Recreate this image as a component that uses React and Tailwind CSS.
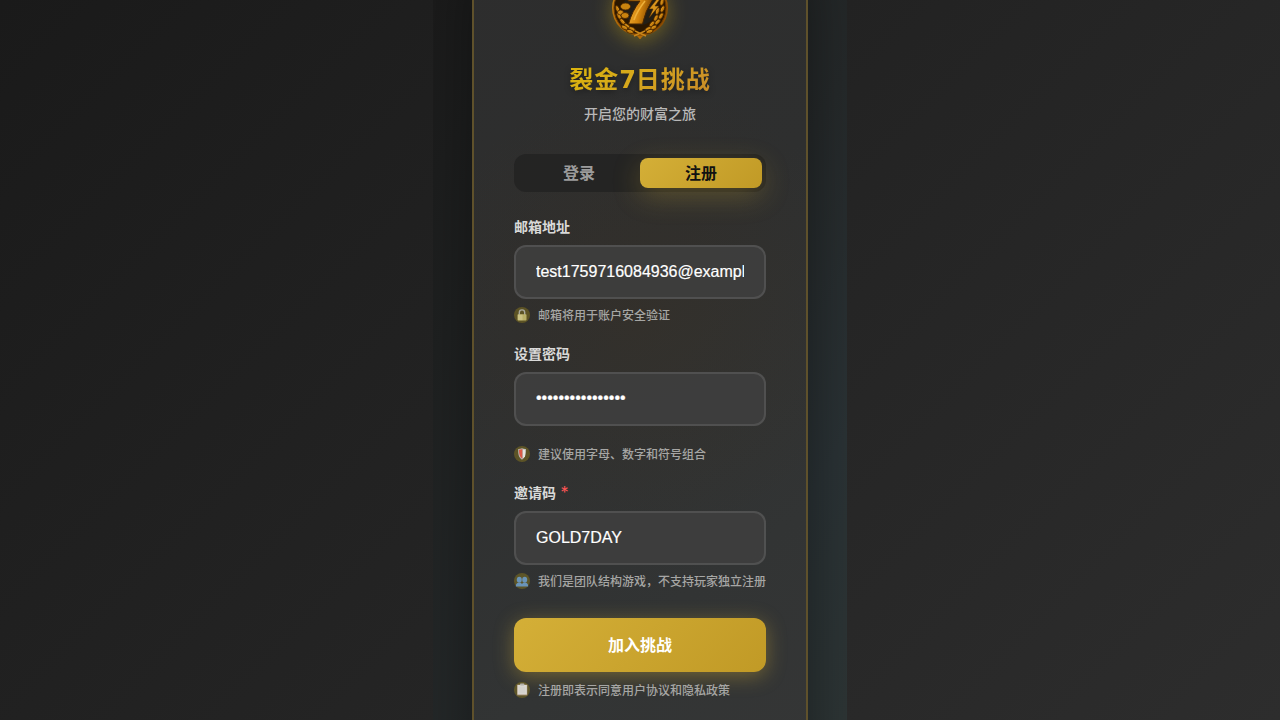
import React from "react";

function Leaf({ x, y, r }) {
  return (
    <g transform={`translate(${x} ${y}) rotate(${r})`}>
      <ellipse rx="3.6" ry="1.8" fill="#c47c0c" stroke="#3d1f00" strokeWidth=".7" />
      <path d="M-2-.4Q0-1.3 2-.4" stroke="#e8a92c" strokeWidth=".5" fill="none" />
    </g>
  );
}

function Medal() {
  return (
    <svg viewBox="0 0 60 60" className="h-[60px] w-[60px] shrink-0 overflow-visible drop-shadow-[0_4px_10px_rgba(190,160,20,0.45)]">
      <defs>
        <linearGradient id="rim" x1="0" y1="0" x2="1" y2="1">
          <stop offset="0" stopColor="#d8931a" />
          <stop offset=".5" stopColor="#a86105" />
          <stop offset="1" stopColor="#7d4200" />
        </linearGradient>
        <linearGradient id="seven" x1="0" y1="0" x2="1" y2=".3">
          <stop offset="0" stopColor="#a86208" />
          <stop offset=".35" stopColor="#e39a20" />
          <stop offset=".6" stopColor="#d0820c" />
          <stop offset="1" stopColor="#7d4300" />
        </linearGradient>
      </defs>
      <path d="M25 54h10l-3 3-1.500 2h-1L28 57z" fill="#b36b08" />
      <circle cx="30" cy="28" r="28" fill="url(#rim)" />
      <circle cx="30" cy="28" r="26" fill="#2b1700" stroke="#6b3900" strokeWidth="1" />
      <circle cx="30" cy="28" r="17" fill="#221e16" />
      <Leaf x={7.500} y={29} r={70} />
      <Leaf x={9} y={36} r={65} />
      <Leaf x={12.500} y={41.500} r={50} />
      <Leaf x={17} y={46} r={38} />
      <Leaf x={14.500} y={47.500} r={28} />
      <Leaf x={22} y={49} r={25} />
      <Leaf x={20} y={51.500} r={15} />
      <Leaf x={52} y={22} r={-75} />
      <Leaf x={52.500} y={29} r={-65} />
      <Leaf x={47.500} y={31} r={-75} />
      <Leaf x={51} y={36} r={-60} />
      <Leaf x={46} y={38} r={-65} />
      <Leaf x={47.500} y={42} r={-45} />
      <Leaf x={42} y={44} r={-50} />
      <Leaf x={43.500} y={47.500} r={-28} />
      <Leaf x={38} y={49} r={-30} />
      <Leaf x={39.500} y={51.500} r={-15} />
      <path d="M25 51l11 5M35 51l-11 5" stroke="#c9861a" strokeWidth="1.400" />
      <ellipse cx="15.500" cy="26.500" rx="5" ry="3.500" fill="#c9830f" stroke="#4a2600" strokeWidth=".8" />
      <ellipse cx="10.500" cy="32.500" rx="3" ry="2.500" fill="#cf8a18" stroke="#4a2600" strokeWidth=".8" />
      <ellipse cx="15" cy="35.500" rx="4" ry="3" fill="#c9830f" stroke="#4a2600" strokeWidth=".8" />
      <path d="M18 12h26l-1 7Q35 31 32.500 44H18.500Q22 31 30 21H18z" fill="url(#seven)" stroke="#4a2600" strokeWidth="1" />
      <path d="M35 21Q27 31 24 40" stroke="#eeb03a" strokeWidth="1.600" fill="none" />
      <path d="M47 19l-8 10h4l-4 9 10-12h-4l5-7z" fill="#d9941c" stroke="#4a2600" strokeWidth=".6" />
    </svg>
  );
}

const glyphs = {
  lock: (
    <g>
      <path d="M5.300 8V5.600a2.700 2.700 0 015.400 0V8" fill="none" stroke="#a9a99c" strokeWidth="1.400" />
      <rect x="3.500" y="7.200" width="9" height="6.400" rx=".8" fill="#b9b068" />
      <path d="M4 7.600h4.500v5.600H4z" fill="#d5cf98" opacity=".6" />
    </g>
  ),
  shield: (
    <g>
      <path d="M8 2.300Q10.500 3.300 12 3C12.300 8 11.300 11.600 8 13.700 4.700 11.600 4 8 4.200 3Q5.700 3.300 8 2.300z" fill="#b9b8b2" />
      <path d="M8.300 3Q6.500 4 5 3.800C5 8 5.700 11 8.300 12.700z" fill="#dc5a48" />
      <path d="M9.200 3.400l1.600.4v6.700L9.200 12.200z" fill="#f0efea" />
    </g>
  ),
  people: (
    <g fill="#6a94b8">
      <ellipse cx="5.300" cy="6.800" rx="2.500" ry="3" />
      <ellipse cx="10.700" cy="6.800" rx="2.500" ry="3" />
      <path d="M1.800 13.500c0-2.700 1.200-3.500 2.600-3.800h1.800c1 .2 1.500.7 1.800 1.400.3-.7.800-1.200 1.800-1.400h1.800c1.400.3 2.600 1.100 2.600 3.800z" />
    </g>
  ),
  clipboard: (
    <g>
      <rect x="3" y="2.600" width="10.400" height="10.800" rx=".6" fill="#9c8566" />
      <rect x="3.500" y="3" width="9.400" height="9.600" fill="#d9d6d0" />
      <rect x="6" y="1.400" width="4.400" height="2" rx=".8" fill="#b5b3ad" />
      <path d="M5 6h6M5 8h6M5 10h6" stroke="#cbc9c4" strokeWidth=".6" />
    </g>
  ),
};

function Hint({ icon, className, children }) {
  return (
    <div className={`flex h-4 items-center gap-2 whitespace-nowrap text-xs leading-4 font-medium text-[#a6a6a4] ${className}`}>
      <span className="h-4 w-4 shrink-0 rounded-full bg-[#a08a18]/40">
        <svg viewBox="0 0 16 16" className="h-4 w-4">{glyphs[icon]}</svg>
      </span>
      <span className="pt-0.5">{children}</span>
    </div>
  );
}

function Field({ label, type = "text", value, required, className }) {
  return (
    <label className={`block ${className}`}>
      <span className="block h-5 text-sm leading-5 font-bold text-[#d9d9d8]">
        {label}
        {required && <span className="text-base leading-none font-normal text-[#ff5555]"> *</span>}
      </span>
      <input
        type={type}
        defaultValue={value}
        className={`mt-2 block h-[54px] w-full rounded-xl border-2 border-white/10 bg-[#404040]/85 px-5 font-['Liberation_Sans',sans-serif] text-base text-white outline-none [-webkit-text-stroke:0.2px_white] ${type === "password" ? "pb-0.5" : ""}`}
      />
    </label>
  );
}

export default function App() {
  return (
    <main className="h-[720px] overflow-hidden bg-[linear-gradient(135deg,#1a1a1a_0%,#2d2d2d_100%)] font-[Inter,'Noto_Sans_CJK_SC',sans-serif]">
      <div className="mx-auto flex h-[720px] w-[414px] items-center justify-center overflow-hidden bg-[linear-gradient(120deg,#1b1b1b_0%,#1f2121_25%,#25292a_55%,#2a3235_80%,#2d3535_100%)]">
        <section className="flex h-[844px] w-[336px] shrink-0 flex-col items-center rounded-3xl border-2 border-[#5f512b] bg-[radial-gradient(circle_at_50%_44%,rgba(62,48,30,0.28)_0%,rgba(62,48,30,0)_230px),linear-gradient(145deg,#2d2d2d_0%,#2e2f2f_40%,#323434_75%,#353636_100%)] px-10 pt-10 shadow-[0_20px_60px_rgba(0,0,0,0.4)]">
          <Medal />
          <h1 className="mt-[25px] h-[30px] bg-[linear-gradient(135deg,#dcb50c_0%,#d5a61e_50%,#c98a28_100%)] bg-clip-text text-2xl leading-[30px] font-bold tracking-[1px] whitespace-nowrap text-transparent drop-shadow-[0_2px_3px_rgba(0,0,0,0.35)]">
            裂金<span className="font-['DejaVu_Sans',sans-serif] tracking-[-0.4px]">7</span>日挑战
          </h1>
          <p className="mt-[9px] h-5 text-sm leading-5 font-medium text-[#b8b8b8]">开启您的财富之旅</p>

          <div className="mt-[30px] flex h-[38px] w-full rounded-xl bg-[#1e1e1e]/65 p-1 text-base leading-[30px] font-bold">
            <button className="flex-1 rounded-lg text-[#9c9c9c]">登录</button>
            <button className="flex-1 rounded-lg bg-[linear-gradient(135deg,#d4af37_0%,#c19a26_100%)] text-[#111] shadow-[0_8px_28px_rgba(212,175,55,0.28)]">
              注册
            </button>
          </div>

          <form className="w-full">
            <Field className="mt-[25px]" label="邮箱地址" value="test1759716084936@example.com" />
            <Hint icon="lock" className="mt-2">邮箱将用于账户安全验证</Hint>
            <Field className="mt-[21px]" label="设置密码" type="password" value="GoldChallenge#7d" />
            <Hint icon="shield" className="mt-5">建议使用字母、数字和符号组合</Hint>
            <Field className="mt-[21px]" label="邀请码" value="GOLD7DAY" required />
            <Hint icon="people" className="mt-2">我们是团队结构游戏，不支持玩家独立注册</Hint>
            <button
              type="button"
              className="mt-[29px] block h-[54px] w-full rounded-xl bg-[linear-gradient(135deg,#d4af37_0%,#c19a26_100%)] text-base font-bold text-white shadow-[0_4px_20px_rgba(212,175,55,0.4)]"
            >
              加入挑战
            </button>
            <Hint icon="clipboard" className="mt-2.5">注册即表示同意用户协议和隐私政策</Hint>
          </form>
        </section>
      </div>
    </main>
  );
}
